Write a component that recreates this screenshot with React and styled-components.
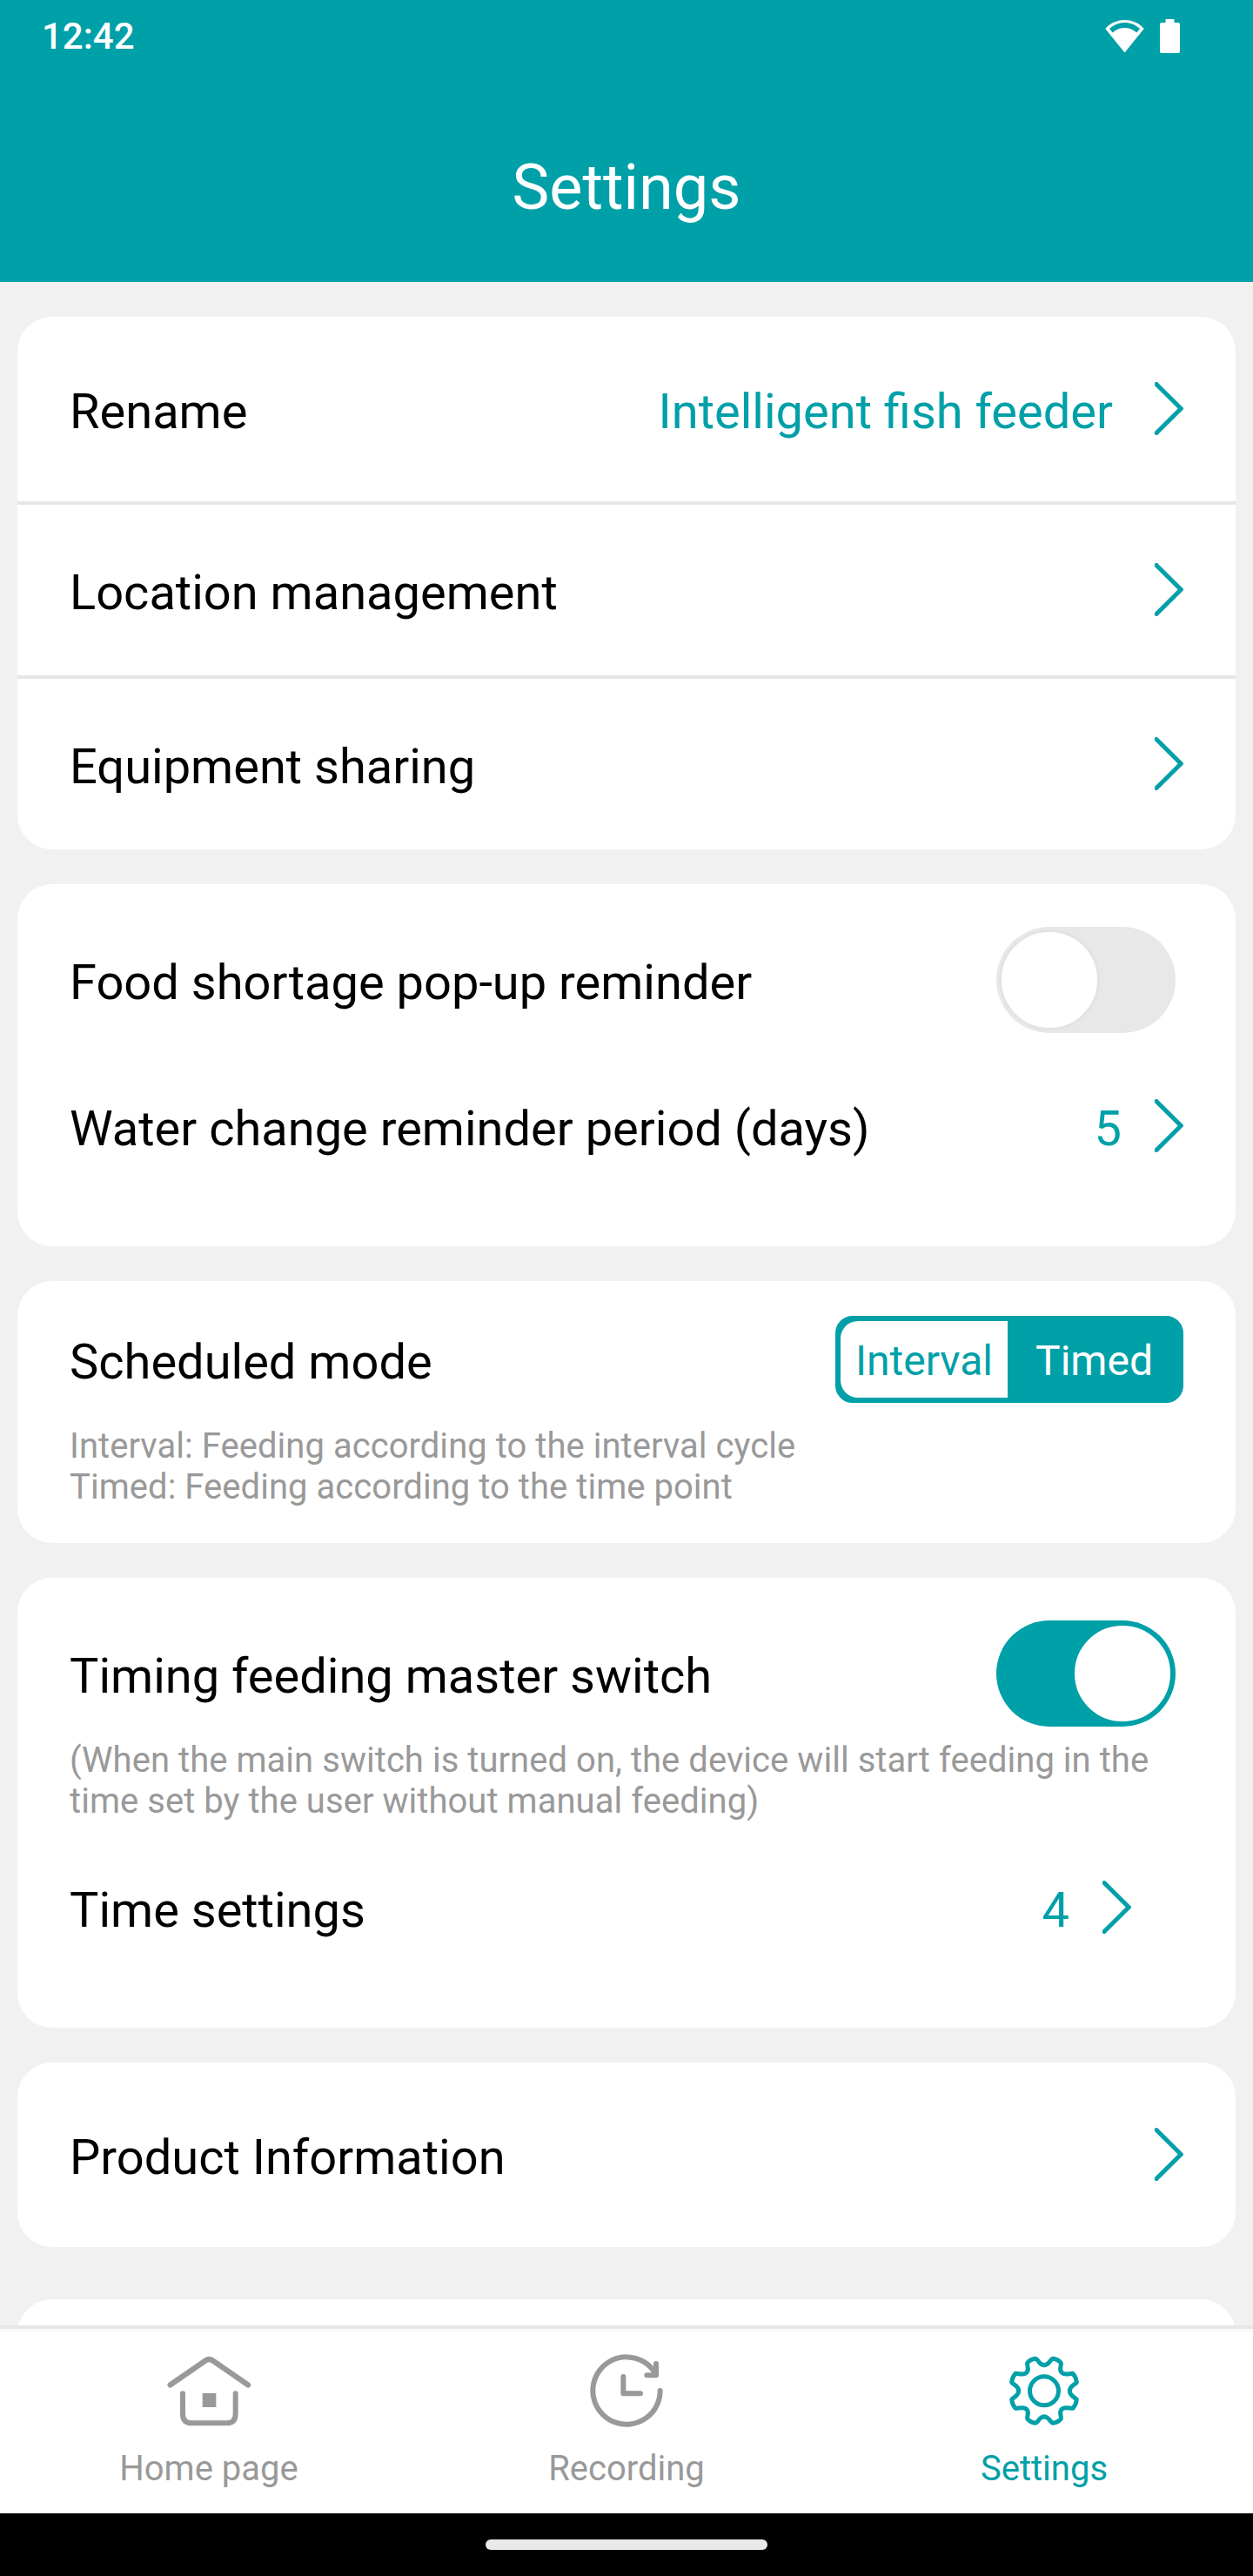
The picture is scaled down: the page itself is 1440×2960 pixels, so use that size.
import React, { useState } from 'react';
import styled, { createGlobalStyle } from 'styled-components';

const TEAL = '#00a0a8';
const GREY = '#999999';

const Chevron = () => (
  <ChevronSvg viewBox="0 0 33 61">
    <path d="M2 2.5 L30.2 30.5 L2 58.5" />
  </ChevronSvg>
);

const HomeIcon = () => (
  <TabSvg viewBox="540 420 360 300">
    <path d="M587 541 L709 457 Q721 449 733 457 L855 541" strokeWidth="19" />
    <path d="M630 571 V641 Q630 673 662 673 H780 Q812 673 812 641 V571" strokeWidth="18" />
    <rect x="698" y="570" width="47" height="48" fill="currentColor" stroke="none" />
  </TabSvg>
);

const RecordingIcon = () => (
  <TabSvg viewBox="540 420 360 300" strokeWidth="18">
    <path d="M836 561 A116 116 0 1 1 816 496" />
    <path d="M822 468 V508 H790" />
    <path d="M709 513 V571 H768" />
  </TabSvg>
);

// one quarter of the gear outline, mirrored for the other three
const GEAR_QUARTER =
  'M720 473 C740 473 740 451 751 451 Q769 454 778 466 C780 478 770 486 780 498 C790 510 808 501 819 502 Q830 514 832 532 C828 540 808 543 808 562';

const GearIcon = () => (
  <TabSvg viewBox="540 420 360 300" strokeWidth="15">
    <circle cx="720" cy="562" r="49.5" />
    <path d={GEAR_QUARTER} />
    <path d={GEAR_QUARTER} transform="translate(1440 0) scale(-1 1)" />
    <path d={GEAR_QUARTER} transform="translate(0 1124) scale(1 -1)" />
    <path d={GEAR_QUARTER} transform="translate(1440 1124) scale(-1 -1)" />
  </TabSvg>
);

const tabs = [
  { name: 'Home page', icon: <HomeIcon /> },
  { name: 'Recording', icon: <RecordingIcon /> },
  { name: 'Settings', icon: <GearIcon /> },
];

const App = () => {
  const [shortage, setShortage] = useState(false);
  const [master, setMaster] = useState(true);
  const [mode, setMode] = useState('Interval');
  const [tab, setTab] = useState('Settings');

  return (
    <>
      <GlobalStyle />
      <Screen>
        <StatusBar>
          <Clock>12:42</Clock>
          <StatusIcons viewBox="0 0 88 40">
            <path d="M0.3 11 C12 -2.2 33 -2.2 44.7 11 L22.5 38.5 Z" />
            <path d="M5 11 C15 1.6 30 1.6 40 11 L36.3 15.5 C28 8.2 17 8.2 8.7 15.5 Z" fill={TEAL} />
            <path d="M69.5 0 H79.5 V4 H84 Q86 4 86 6 V37 Q86 39 84 39 H65 Q63 39 63 37 V6 Q63 4 65 4 H69.5 Z" />
          </StatusIcons>
        </StatusBar>
        <TitleBar>Settings</TitleBar>

        <Content>
          <Card>
            <Row $height={212}>
              <Label>Rename</Label>
              <Value $gap={48}>Intelligent fish feeder</Value>
              <Chevron />
            </Row>
            <Divider />
            <Row $height={196}>
              <Label>Location management</Label>
              <Chevron />
            </Row>
            <Divider />
            <Row $height={196}>
              <Label>Equipment sharing</Label>
              <Chevron />
            </Row>
          </Card>

          <Card $height={416}>
            <Row $height={220}>
              <Label>Food shortage pop-up reminder</Label>
              <Switch $on={shortage} onClick={() => setShortage(!shortage)}>
                <Knob $on={shortage} />
              </Switch>
            </Row>
            <Row $height={116}>
              <Label>Water change reminder period (days)</Label>
              <Value $gap={38}>5</Value>
              <Chevron />
            </Row>
          </Card>

          <Card $height={301} $top={24}>
            <Row $height={132}>
              <Label>Scheduled mode</Label>
              <Segments>
                {['Interval', 'Timed'].map((item) => (
                  <Segment key={item} $selected={item === mode} onClick={() => setMode(item)}>
                    {item}
                  </Segment>
                ))}
              </Segments>
            </Row>
            <Note $top={10}>
              Interval: Feeding according to the interval cycle
              <br />
              Timed: Feeding according to the time point
            </Note>
          </Card>

          <Card $height={517} $top={40}>
            <Row $height={140}>
              <Label>Timing feeding master switch</Label>
              <Switch $on={master} onClick={() => setMaster(!master)}>
                <Knob $on={master} />
              </Switch>
            </Row>
            <Note $top={6}>
              (When the main switch is turned on, the device will start feeding in the
              <br />
              time set by the user without manual feeding)
            </Note>
            <Spacer />
            <Row $height={116} $right={120}>
              <Label>Time settings</Label>
              <Value $gap={38}>4</Value>
              <Chevron />
            </Row>
          </Card>

          <Card>
            <Row $height={212}>
              <Label>Product Information</Label>
              <Chevron />
            </Row>
          </Card>

          <LastCard $height={200} />
        </Content>

        <TabBar>
          {tabs.map(({ name, icon }) => (
            <Tab key={name} $active={name === tab} onClick={() => setTab(name)}>
              {icon}
              <TabName>{name}</TabName>
            </Tab>
          ))}
        </TabBar>
        <GestureBar>
          <Handle />
        </GestureBar>
      </Screen>
    </>
  );
};

export default App;

const GlobalStyle = createGlobalStyle`
  * {
    box-sizing: border-box;
  }

  body {
    margin: 0;
    font-family: Roboto, sans-serif;
    background: #f1f1f1;
  }

  button {
    padding: 0;
    border: none;
    background: none;
    font-family: inherit;
    cursor: pointer;
  }
`;

const Screen = styled.div`
  width: 1440px;
  height: 2960px;
  display: flex;
  flex-direction: column;
  overflow: hidden;
`;

const StatusBar = styled.div`
  height: 84px;
  flex-shrink: 0;
  display: flex;
  justify-content: space-between;
  align-items: center;
  padding: 0 82px 0 48px;
  background: ${TEAL};
`;

const Clock = styled.span`
  font-size: 42px;
  font-weight: 500;
  line-height: 50px;
  color: #fff;
`;

const StatusIcons = styled.svg`
  width: 88px;
  height: 40px;
  fill: #fff;
`;

const TitleBar = styled.header`
  height: 240px;
  flex-shrink: 0;
  padding-top: 90px;
  text-align: center;
  font-size: 72px;
  line-height: 84px;
  color: #fff;
  background: ${TEAL};
`;

const Content = styled.main`
  flex: 1;
  min-height: 0;
  overflow: hidden;
  display: flex;
  flex-direction: column;
  gap: 40px;
  padding: 40px 20px 0;
`;

const Card = styled.section`
  flex-shrink: 0;
  height: ${props => (props.$height ? `${props.$height}px` : 'auto')};
  padding-top: ${props => props.$top || 0}px;
  background: #fff;
  border-radius: 40px;
`;

const LastCard = styled(Card)`
  margin-top: 20px;
`;

const Row = styled.div`
  display: flex;
  align-items: center;
  height: ${props => props.$height}px;
  padding: 0 ${props => props.$right || 60}px 0 60px;
`;

const Divider = styled.div`
  height: 4px;
  background: #e6e6e6;
`;

const Label = styled.span`
  flex: 1;
  padding-top: 6px;
  font-size: 56px;
  line-height: 66px;
  white-space: nowrap;
  color: #000;
`;

const Value = styled.span`
  margin-right: ${props => props.$gap}px;
  padding-top: 6px;
  font-size: 56px;
  line-height: 66px;
  color: ${TEAL};
`;

const ChevronSvg = styled.svg`
  width: 33px;
  height: 61px;
  margin-bottom: 1px;
  flex-shrink: 0;
  fill: none;
  stroke: ${TEAL};
  stroke-width: 5;
  stroke-linecap: round;
`;

const Switch = styled.button`
  width: 206px;
  height: 122px;
  margin-right: 9px;
  padding: 0 3px;
  display: flex;
  align-items: center;
  justify-content: ${props => (props.$on ? 'flex-end' : 'flex-start')};
  border-radius: 61px;
  background: ${props => (props.$on ? TEAL : '#e8e8e8')};
`;

const Knob = styled.span`
  width: 116px;
  height: 116px;
  border: 3px solid ${props => (props.$on ? TEAL : '#e3e3e3')};
  border-radius: 50%;
  background: #fff;
`;

const Segments = styled.div`
  display: flex;
  width: 400px;
  height: 100px;
  border: 6px solid ${TEAL};
  border-radius: 20px;
  background: ${TEAL};
`;

const Segment = styled.button`
  flex: 1;
  padding-top: 3px;
  font-size: 48px;
  line-height: 85px;
  color: ${props => (props.$selected ? TEAL : '#fff')};
  background: ${props => (props.$selected ? '#fff' : TEAL)};

  &:first-child {
    flex: 0 0 192px;
    border-radius: 20px 0 0 20px;
  }

  &:last-child {
    padding-left: 3px;
    border-radius: 0 20px 20px 0;
  }
`;

const Note = styled.p`
  margin: 0;
  padding: ${props => props.$top}px 60px 0;
  font-size: 40px;
  line-height: 47px;
  letter-spacing: 0.04px;
  white-space: nowrap;
  color: ${GREY};
`;

const Spacer = styled.div`
  height: 41px;
`;

const TabBar = styled.nav`
  height: 216px;
  flex-shrink: 0;
  display: flex;
  border-top: 4px solid #e6e6e6;
  background: #fff;
  box-shadow: inset 0 4px 0 #fafafa;
`;

const Tab = styled.button`
  flex: 1;
  display: flex;
  flex-direction: column;
  align-items: center;
  padding-top: 24px;
  color: ${props => (props.$active ? TEAL : GREY)};
`;

const TabSvg = styled.svg`
  width: 120px;
  height: 100px;
  fill: none;
  stroke: currentColor;
  stroke-linecap: round;
  stroke-linejoin: round;
`;

const TabName = styled.span`
  margin-top: 13px;
  font-size: 40px;
  line-height: 47px;
`;

const GestureBar = styled.div`
  height: 72px;
  flex-shrink: 0;
  display: flex;
  justify-content: center;
  align-items: center;
  background: #000;
`;

const Handle = styled.div`
  width: 324px;
  height: 12px;
  border-radius: 6px;
  background: #e9e9e9;
`;
